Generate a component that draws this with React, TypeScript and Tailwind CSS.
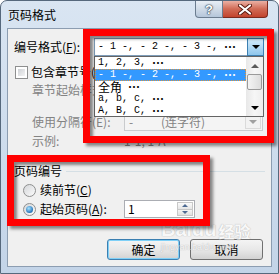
import React from 'react';

const mono = "font-['Liberation_Mono',monospace] text-[10px] whitespace-pre";

const Dots = () => <span className="font-['Noto_Sans_CJK_SC',sans-serif] text-[12px] font-bold">…</span>;

const DownTri = ({ grey }: { grey?: boolean }) => (
  <div
    className={
      grey
        ? 'border-x-[4px] border-x-transparent border-t-[4px] border-t-[#a0a0a0]'
        : 'border-x-[4px] border-x-transparent border-t-[4px] border-t-black'
    }
  />
);

const RedBox = ({ className }: { className: string }) => (
  <div
    className={`absolute border-[7px] border-[#ff0000] pointer-events-none shadow-[3px_3px_3px_rgba(0,0,0,0.45),inset_3px_3px_3px_rgba(0,0,0,0.45)] ${className}`}
  />
);

const ListRow = ({ children, selected }: { children: React.ReactNode; selected?: boolean }) => (
  <div
    className={
      selected
        ? 'h-[12px] flex items-center pl-[2px] bg-[#3399ff] text-white border border-dotted border-[#e0953a]'
        : 'h-[12px] flex items-center pl-[3px]'
    }
  >
    {children}
  </div>
);

export default function App() {
  return (
    <div className="w-[279px] h-[274px] flex flex-col rounded-t-[7px] border border-[#56687c] bg-gradient-to-b from-[#d9e5f2] to-[#c3d4e8] font-['Noto_Sans_CJK_SC',sans-serif] text-[12px] text-black overflow-hidden">
      {/* Title bar */}
      <div className="h-[27px] flex items-start justify-between">
        <span className="ml-[7px] mt-[7px] leading-[13px]">页码格式</span>
        <div className="flex mr-[10px]">
          <div className="w-[28px] h-[17px] flex items-center justify-center rounded-bl-[4px] border border-t-0 border-[#6b7c8f] bg-gradient-to-b from-[#e8eef5] via-[#d0dbe7] to-[#b5c6da] text-white font-bold text-[13px] leading-none font-['Liberation_Sans',sans-serif] [text-shadow:0_0_1px_#2c3e50,0_0_1px_#2c3e50,0_0_2px_#2c3e50]">
            ?
          </div>
          <div className="w-[45px] h-[17px] flex items-center justify-center rounded-br-[4px] border border-t-0 border-l-0 border-[#7a2a1e] bg-gradient-to-b from-[#eab0a4] via-[#d06a55] to-[#c2432d]">
            <svg width="14" height="11" viewBox="0 0 14 11">
              <path d="M2 1.5 L12 9.5 M12 1.5 L2 9.5" stroke="#5a1a10" strokeWidth="4" strokeLinecap="round" />
              <path d="M2 1.5 L12 9.5 M12 1.5 L2 9.5" stroke="#ffffff" strokeWidth="2.2" strokeLinecap="round" />
            </svg>
          </div>
        </div>
      </div>

      {/* Client area */}
      <div className="mx-[6px] h-[239px] border border-[#8c9db1] bg-[#f0f0f0] relative pl-[6px] pt-[9px] leading-[14px]">
        {/* 编号格式 */}
        <div className="h-[18px] flex items-center">
          <span className="w-[80px]">
            编号格式(<span className="underline">F</span>):
          </span>
          <div className="w-[170px] h-[18px] flex border border-[#7f9db9] bg-white">
            <div className={`flex-1 flex items-center pl-[3px] ${mono}`}>
              - 1 -, - 2 -, - 3 -, <Dots />
            </div>
            <div className="w-[17px] -my-px -mr-px flex items-center justify-center border border-[#3c7fb1] bg-gradient-to-b from-[#d4ecfb] to-[#8ec6ec]">
              <DownTri />
            </div>
          </div>
        </div>

        {/* 包含章节号 */}
        <div className="mt-[8px] h-[16px] flex items-center">
          <div className="ml-[1px] w-[13px] h-[13px] border border-[#8e8f8f] bg-white p-[2px]">
            <div className="w-full h-full bg-gradient-to-br from-[#cfd2d6] to-[#f4f4f4]" />
          </div>
          <span className="ml-[3px]">
            包含章节号(<span className="underline">N</span>)
          </span>
        </div>

        {/* 章节起始样式 (mostly covered by the open list) */}
        <div className="mt-[1px] h-[18px] flex items-center text-[#838383]">
          <span className="w-[110px] pl-[18px]">章节起始样式(P):</span>
          <div className="w-[139px] h-[18px] flex border border-[#c9cbcd] bg-[#f4f4f4]">
            <div className="flex-1" />
            <div className="w-[17px] flex items-center justify-center">
              <DownTri grey />
            </div>
          </div>
        </div>

        {/* 使用分隔符 */}
        <div className="mt-[14px] h-[18px] flex items-center text-[#838383]">
          <span className="w-[110px] pl-[18px]">使用分隔符(E):</span>
          <div className="w-[139px] h-[18px] flex border border-[#c9cbcd] bg-[#f4f4f4]">
            <div className="flex-1 flex items-center pl-[4px]">
              <span className="w-[32px]">-</span>
              <span>(连字符)</span>
            </div>
            <div className="w-[16px] my-[1px] mr-[1px] flex items-center justify-center border border-[#dadada] bg-[#f2f2f2]">
              <DownTri grey />
            </div>
          </div>
        </div>

        {/* 示例 */}
        <div className="mt-[2px] h-[16px] flex items-center text-[#838383]">
          <span className="w-[110px] pl-[18px]">示例:</span>
          <span>1-1, 1-A</span>
        </div>

        {/* 页码编号 */}
        <div className="mt-[14px] h-[16px] flex items-center">
          <span>页码编号</span>
          <div className="flex-1 h-px ml-[4px] mr-[6px] bg-[#d5dfe5]" />
        </div>

        <div className="mt-[3px] h-[16px] flex items-center">
          <div className="ml-[9px] w-[13px] h-[13px] rounded-full border border-[#8e8f8f] bg-gradient-to-br from-[#d5d7da] to-[#fbfbfb]" />
          <span className="ml-[4px]">
            续前节(<span className="underline">C</span>)
          </span>
        </div>

        <div className="mt-[2px] h-[18px] flex items-center">
          <div className="ml-[9px] w-[13px] h-[13px] rounded-full border border-[#8e8f8f] bg-gradient-to-br from-[#d5d7da] to-[#fbfbfb] flex items-center justify-center">
            <div className="w-[7px] h-[7px] rounded-full bg-[radial-gradient(circle_at_40%_35%,#a8e4ff,#1d6cb4_75%)]" />
          </div>
          <span className="ml-[4px] w-[84px]">
            起始页码(<span className="underline">A</span>):
          </span>
          <div className="w-[71px] h-[18px] flex border border-[#abadb3] bg-white">
            <div className="flex-1 flex items-center pl-[3px]">1</div>
            <div className="w-[16px] my-[1px] mr-[1px] flex flex-col border border-[#c8c8c8]">
              <div className="flex-1 flex items-center justify-center bg-gradient-to-b from-[#fbfbfb] to-[#e6e6e6] border-b border-[#c8c8c8]">
                <div className="border-x-[3px] border-x-transparent border-b-[3px] border-b-[#4e6a92]" />
              </div>
              <div className="flex-1 flex items-center justify-center bg-gradient-to-b from-[#f4f4f4] to-[#e0e0e0]">
                <div className="border-x-[3px] border-x-transparent border-t-[3px] border-t-[#4e6a92]" />
              </div>
            </div>
          </div>
        </div>

        {/* Buttons */}
        <div className="mt-[21px] flex justify-end gap-[10px] pr-[8px]">
          <div className="w-[73px] h-[21px] flex items-center justify-center rounded-[3px] border border-[#3c7fb1] shadow-[inset_0_0_0_1px_#7fd0f7] bg-gradient-to-b from-[#f4f4f4] via-[#e8e8e8] to-[#d2d2d2]">
            确定
          </div>
          <div className="w-[73px] h-[21px] flex items-center justify-center rounded-[3px] border border-[#707070] bg-gradient-to-b from-[#f4f4f4] via-[#e8e8e8] to-[#d2d2d2]">
            取消
          </div>
        </div>

        {/* Open dropdown list */}
        <div className="absolute left-[86px] top-[27px] w-[170px] h-[61px] flex border border-[#646464] bg-white">
          <div className="flex-1">
            <ListRow>
              <span className={mono}>1, 2, 3, </span>
              <Dots />
            </ListRow>
            <ListRow selected>
              <span className={mono}>- 1 -, - 2 -, - 3 -, </span>
              <Dots />
            </ListRow>
            <ListRow>
              <span className="leading-[12px]">全角</span>
              <span className={mono}> </span>
              <Dots />
            </ListRow>
            <ListRow>
              <span className={mono}>a, b, c, </span>
              <Dots />
            </ListRow>
            <ListRow>
              <span className={mono}>A, B, C, </span>
              <Dots />
            </ListRow>
          </div>
          <div className="w-[17px] flex flex-col items-center bg-gradient-to-r from-[#e8e8e8] via-[#f6f6f6] to-[#eeeeee]">
            <div className="h-[17px] flex items-center justify-center">
              <div className="border-x-[4px] border-x-transparent border-b-[4px] border-b-[#5a5a5a]" />
            </div>
            <div className="w-[15px] h-[16px] rounded-[2px] border border-[#9a9a9a] bg-gradient-to-r from-[#f4f4f4] to-[#dcdcdc]" />
            <div className="flex-1" />
            <div className="h-[16px] flex items-center justify-center">
              <DownTri />
            </div>
          </div>
        </div>

        {/* Watermark */}
        <div className="absolute left-[153px] top-[190px] flex flex-col items-start text-white opacity-55 pointer-events-none [text-shadow:0_0_1px_#9a9a9a,0_0_1px_#9a9a9a]">
          <div className="flex items-end leading-none">
            <span className="font-['Liberation_Sans',sans-serif] font-bold text-[20px]">Baidu</span>
            <span className="text-[16px] font-bold ml-[2px]">经验</span>
          </div>
          <span className="font-['Liberation_Sans',sans-serif] text-[9px] leading-none mt-[4px]">jingyan.baidu.com</span>
        </div>

        {/* Annotation boxes */}
        <RedBox className="left-[75px] top-0 w-[191px] h-[114px]" />
        <RedBox className="-left-px top-[126px] w-[203px] h-[71px]" />
      </div>
    </div>
  );
}
